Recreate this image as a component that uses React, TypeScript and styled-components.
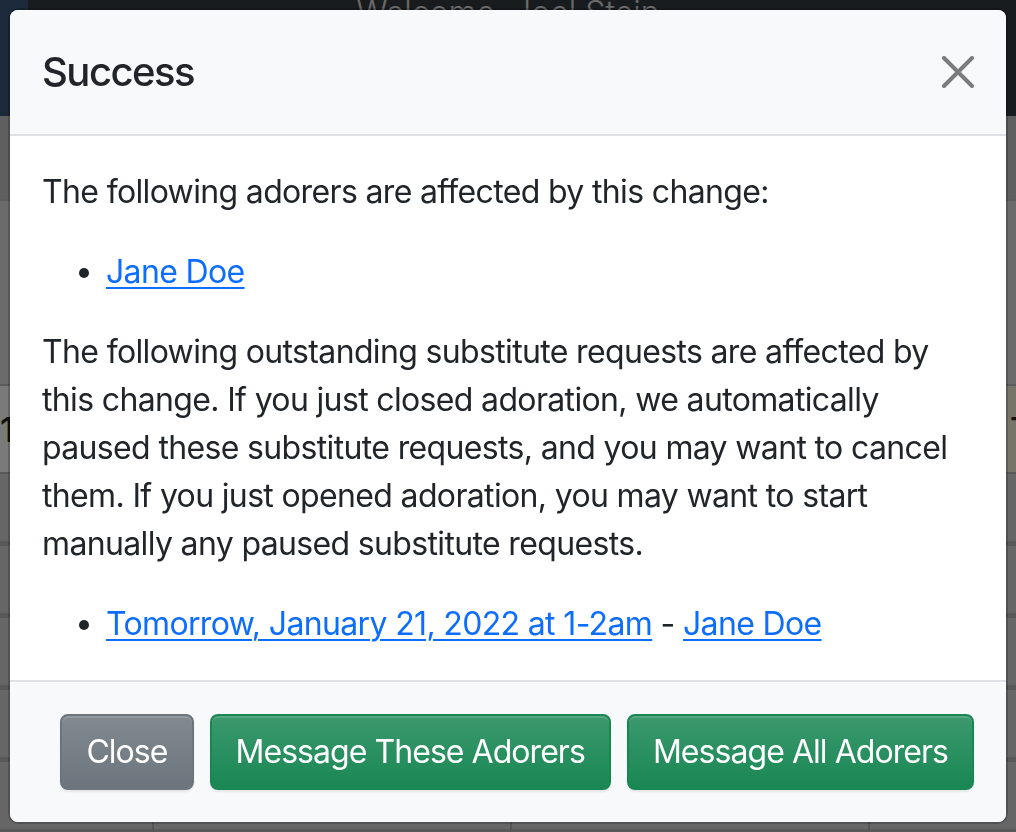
import React from "react";
import styled, { createGlobalStyle } from "styled-components";

const GlobalStyle = createGlobalStyle`
  html, body {
    margin: 0;
    padding: 0;
  }
  body {
    font-family: Inter, "Noto Sans", "Liberation Sans", sans-serif;
    background: #cccccc;
    overflow: hidden;
  }
  * {
    box-sizing: border-box;
  }
`;

/* ---------- page behind the modal ---------- */

const Page = styled.div`
  height: 100vh;
  display: flex;
  flex-direction: column;
  background: #cccccc;
`;

const Navbar = styled.div`
  height: 116px;
  display: flex;
  background: #33393f;
`;

const Brand = styled.div`
  width: 28px;
  background: #385476;
`;

const Welcome = styled.div`
  flex: 1;
  margin: -7px 28px 0 0;
  text-align: center;
  color: #d4d4d4;
  font-size: 32px;
  font-weight: 300;
  line-height: 40px;
`;

const HeadBand = styled.div<{ $height: number; $bg: string }>`
  height: ${(p) => p.$height}px;
  background: ${(p) => p.$bg};
  border-bottom: 2px solid #b8b8b8;
`;

const Grid = styled.div`
  display: grid;
  grid-template-columns: 152px 356px 356px 1fr;
  column-gap: 2px;
  background: #aaaaaa;
`;

const DayCell = styled.div<{ $today?: boolean }>`
  height: 86px;
  display: flex;
  align-items: center;
  padding-left: ${(p) => (p.$today ? "140px" : "0")};
  background: ${(p) => (p.$today ? "#eee8d4" : "#f4f4f4")};
  color: #222;
  font-size: 34px;
  font-weight: 500;
  white-space: nowrap;
  overflow: hidden;
`;

const SlotCell = styled.div`
  height: 72px;
  background: #cccccc;
  border-top: 2px solid #b2b2b2;
  border-bottom: 3px solid #b2b2b2;
`;

/* ---------- modal ---------- */

const Backdrop = styled.div`
  position: fixed;
  inset: 0;
  background: rgba(0, 0, 0, 0.5);
`;

const Dialog = styled.div`
  position: fixed;
  inset: 0;
  display: flex;
  justify-content: center;
  align-items: flex-start;
  padding-top: 8px;
`;

const Content = styled.div`
  width: 1000px;
  display: flex;
  flex-direction: column;
  background: #fff;
  background-clip: padding-box;
  border: 2px solid rgba(0, 0, 0, 0.2);
  border-radius: 10px;
  overflow: hidden;
  color: #212529;
  letter-spacing: -0.65px;
`;

const Header = styled.div`
  display: flex;
  align-items: center;
  padding: 32px;
  background: #f8f9fa;
  border-bottom: 2px solid #dee2e6;
`;

const Title = styled.h5`
  margin: 0;
  font-size: 40px;
  font-weight: 500;
  line-height: 60px;
  letter-spacing: -1.5px;
`;

const CloseButton = styled.button`
  box-sizing: content-box;
  width: 32px;
  height: 32px;
  padding: 16px;
  margin: -16px -16px -16px auto;
  display: flex;
  align-items: center;
  justify-content: center;
  border: 0;
  background: transparent;
  opacity: 0.5;
  cursor: pointer;
`;

const Body = styled.div`
  padding: 32px;
  font-size: 32px;
  line-height: 48px;
`;

const Paragraph = styled.p`
  margin: 0 0 32px;
`;

const List = styled.ul`
  margin: 0 0 32px;
  padding-left: 64px;
  &:last-child {
    margin-bottom: 0;
  }
`;

const Link = styled.a`
  color: #0d6efd;
  text-decoration: underline;
  text-underline-offset: 4px;
  text-decoration-thickness: 2px;
`;

const Footer = styled.div`
  display: flex;
  flex-wrap: wrap;
  align-items: center;
  justify-content: flex-end;
  padding: 24px;
  background: #f8f9fa;
  border-top: 2px solid #dee2e6;
`;

const VARIANTS = {
  secondary: "#6c757d",
  success: "#198754",
};

const Button = styled.button<{ $variant: keyof typeof VARIANTS }>`
  margin: 8px;
  padding: 12px 24px;
  font-family: inherit;
  font-size: 32px;
  font-weight: 400;
  line-height: 48px;
  letter-spacing: -0.95px;
  white-space: nowrap;
  color: #fff;
  border: 2px solid ${(p) => VARIANTS[p.$variant]};
  border-radius: 8px;
  background: ${(p) => VARIANTS[p.$variant]}
    linear-gradient(180deg, rgba(255, 255, 255, 0.15), rgba(255, 255, 255, 0));
  box-shadow: inset 0 2px 0 rgba(255, 255, 255, 0.15),
    0 2px 2px rgba(0, 0, 0, 0.075);
  cursor: pointer;
`;

const CloseIcon = () => (
  <svg width="32" height="32" viewBox="0 0 16 16">
    <path
      d="M1 1L15 15M15 1L1 15"
      stroke="#000"
      strokeWidth="2"
      strokeLinecap="round"
    />
  </svg>
);

const App = () => {
  const slots = Array.from({ length: 5 });

  return (
    <>
      <GlobalStyle />
      <Page>
        <Navbar>
          <Brand />
          <Welcome>Welcome, Joel Stein</Welcome>
        </Navbar>
        <HeadBand $height={86} $bg="#bebebe" />
        <HeadBand $height={185} $bg="#d6d6d6" />
        <Grid>
          <DayCell>1</DayCell>
          <DayCell />
          <DayCell />
          <DayCell $today>Th</DayCell>
          {slots.map((_, i) => (
            <React.Fragment key={i}>
              <SlotCell />
              <SlotCell />
              <SlotCell />
              <SlotCell />
            </React.Fragment>
          ))}
        </Grid>
      </Page>

      <Backdrop />
      <Dialog>
        <Content>
          <Header>
            <Title>Success</Title>
            <CloseButton aria-label="Close">
              <CloseIcon />
            </CloseButton>
          </Header>
          <Body>
            <Paragraph>The following adorers are affected by this change:</Paragraph>
            <List>
              <li>
                <Link href="#">Jane Doe</Link>
              </li>
            </List>
            <Paragraph>
              The following outstanding substitute requests are affected by
              this change. If you just closed adoration, we automatically
              paused these substitute requests, and you may want to cancel
              them. If you just opened adoration, you may want to start
              manually any paused substitute requests.
            </Paragraph>
            <List>
              <li>
                <Link href="#">Tomorrow, January 21, 2022 at 1-2am</Link> -{" "}
                <Link href="#">Jane Doe</Link>
              </li>
            </List>
          </Body>
          <Footer>
            <Button $variant="secondary">Close</Button>
            <Button $variant="success">Message These Adorers</Button>
            <Button $variant="success">Message All Adorers</Button>
          </Footer>
        </Content>
      </Dialog>
    </>
  );
};

export default App;
